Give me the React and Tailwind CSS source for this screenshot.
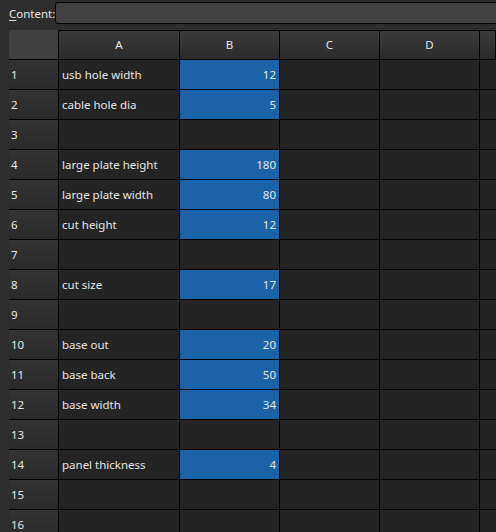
import React from 'react';

const rows = [
  ['usb hole width', '12'],
  ['cable hole dia', '5'],
  null,
  ['large plate height', '180'],
  ['large plate width', '80'],
  ['cut height', '12'],
  null,
  ['cut size', '17'],
  null,
  ['base out', '20'],
  ['base back', '50'],
  ['base width', '34'],
  null,
  ['panel thickness', '4'],
  null,
  null,
];

const cols = ['A', 'B', 'C', 'D', ''];

export default function App() {
  return (
    <div className="h-[532px] w-[496px] overflow-hidden bg-[#2d2d2d] text-[11.5px] text-[#e6e6e6]" style={{ fontFamily: '"Noto Sans", "Open Sans", sans-serif' }}>
      {/* content bar */}
      <div className="flex h-[30px] items-start pl-[9px]">
        <div className="w-[49px] pt-[5px] leading-[18px]">
          <span className="underline underline-offset-2">C</span>ontent:
        </div>
        <div className="mt-[2px] h-[22px] w-[460px] shrink-0 rounded-[3px] border border-black bg-[#424242]" />
      </div>

      {/* sheet */}
      <div className="pl-[9px]">
        <div className="grid grid-cols-[50px_121px_100px_100px_100px_1fr]">
          <div className="h-[30px] border-r border-b border-black bg-[#404040]" />
          {cols.map((c, i) => (
            <div
              key={i}
              className="flex h-[30px] items-center justify-center border-t border-r border-b border-black bg-gradient-to-b from-[#3a3a3a] to-[#2b2b2b]"
            >
              {c}
            </div>
          ))}

          {rows.map((r, i) => (
            <React.Fragment key={i}>
              <div className="flex h-[30px] items-center border-r border-b border-black bg-gradient-to-b from-[#333333] to-[#2a2a2a] pl-[2px]">
                {i + 1}
              </div>
              <div className="flex h-[30px] items-center border-r border-b border-black bg-[#242424] pl-[3px]">
                {r ? r[0] : ''}
              </div>
              <div
                className={`flex h-[30px] items-center justify-end border-r border-b border-black pr-[3px] ${r ? 'bg-[#1a63a9]' : 'bg-[#242424]'}`}
              >
                {r ? r[1] : ''}
              </div>
              <div className="h-[30px] border-r border-b border-black bg-[#242424]" />
              <div className="h-[30px] border-r border-b border-black bg-[#242424]" />
              <div className="h-[30px] border-b border-black bg-[#242424]" />
            </React.Fragment>
          ))}
        </div>
      </div>
    </div>
  );
}
